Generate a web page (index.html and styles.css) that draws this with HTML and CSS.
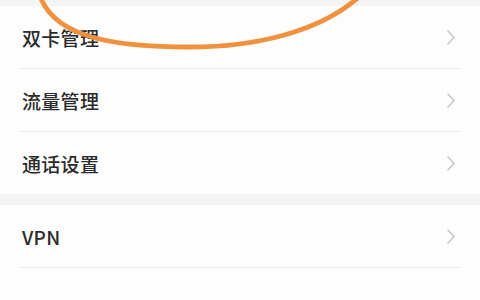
FILE: index.html
```html
<!DOCTYPE html>
<html>
<head>
  <meta charset="UTF-8">
  <title>设置</title>
  <link rel="stylesheet" href="styles.css">
</head>
<body>
  <div class="screen">
    <div class="group">
      <div class="row">
        <span class="label">双卡管理</span>
        <svg class="chevron" width="8" height="15" viewBox="0 0 8 15"><path d="M1 1 L7 7.5 L1 14" /></svg>
      </div>
      <div class="row">
        <span class="label">流量管理</span>
        <svg class="chevron" width="8" height="15" viewBox="0 0 8 15"><path d="M1 1 L7 7.5 L1 14" /></svg>
      </div>
      <div class="row">
        <span class="label">通话设置</span>
        <svg class="chevron" width="8" height="15" viewBox="0 0 8 15"><path d="M1 1 L7 7.5 L1 14" /></svg>
      </div>
    </div>

    <div class="group group-last">
      <div class="row row-divided">
        <span class="label">VPN</span>
        <svg class="chevron" width="8" height="15" viewBox="0 0 8 15"><path d="M1 1 L7 7.5 L1 14" /></svg>
      </div>
    </div>

    <!-- hand-drawn marker over the first row -->
    <svg class="marker" width="480" height="60" viewBox="0 0 480 60">
      <path d="M40 -4 C55 38, 115 47, 190 47 C255 47, 320 32, 360 -4" />
    </svg>
  </div>
</body>
</html>
```

FILE: styles.css
```css
body {
  margin: 0;
  width: 480px;
  height: 300px;
  overflow: hidden;
  background: #f4f4f4;
  font-family: "Noto Sans CJK SC", "Noto Sans", sans-serif;
}
.screen {
  position: relative;
  padding-top: 6px;
}
.group {
  background: #fdfdfd;
  margin-bottom: 11px;
}
.group-last {
  height: 95px;
  margin-bottom: 0;
}
.row {
  height: 62px;
  display: flex;
  align-items: center;
  justify-content: space-between;
  padding: 0 25px 0 22px;
  position: relative;
}
.row + .row::before,
.row-divided::after {
  content: "";
  position: absolute;
  left: 20px;
  right: 20px;
  height: 1px;
  background: #ebebeb;
}
.row + .row::before {
  top: -1px;
}
.row-divided::after {
  bottom: -1px;
}
.row + .row {
  margin-top: 1px;
}
.label {
  font-size: 19px;
  font-weight: 500;
  color: #2a2a2a;
  letter-spacing: 0.3px;
}
.chevron path {
  fill: none;
  stroke: #c8c8c8;
  stroke-width: 1.6;
  stroke-linecap: round;
  stroke-linejoin: round;
}
.marker {
  position: absolute;
  left: 0;
  top: 0;
  pointer-events: none;
}
.marker path {
  fill: none;
  stroke: #f0913e;
  stroke-width: 4.8;
  stroke-linecap: round;
}
```
